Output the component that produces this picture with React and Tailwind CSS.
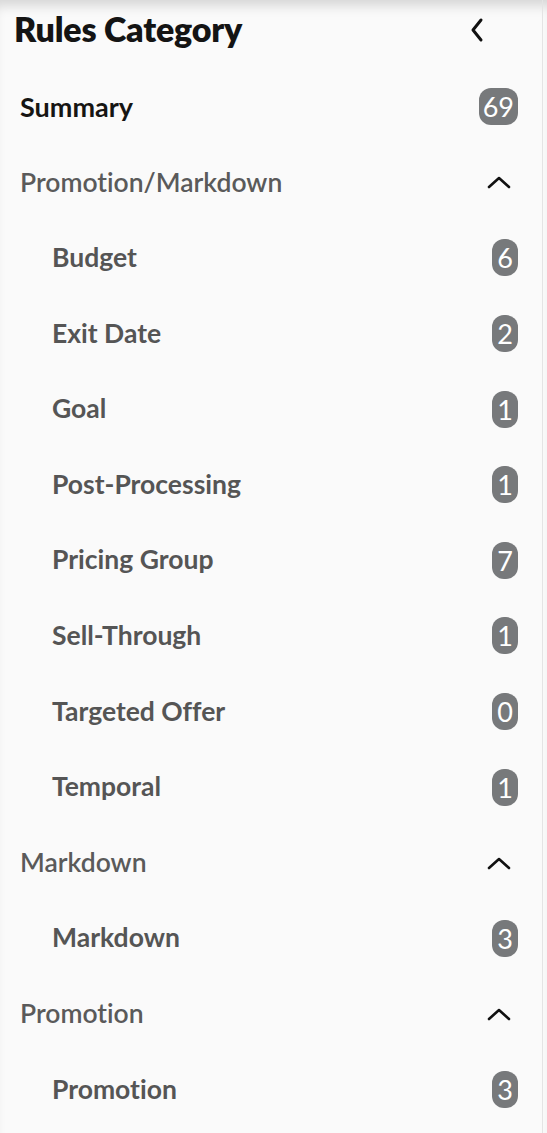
import React from "react";

const Badge = ({ n }) => (
  <span className="flex h-[37px] min-w-[26px] items-center justify-center rounded-[12px] bg-[#77797b] px-[4px] text-[27px] font-normal leading-none text-white">
    {n}
  </span>
);

const ChevronUp = () => (
  <svg width="24" height="16" viewBox="0 0 24 16" fill="none">
    <path d="M2 13 L12 4 L22 13" stroke="#111" strokeWidth="2.6" strokeLinecap="round" strokeLinejoin="round" />
  </svg>
);

const ChevronLeft = () => (
  <svg width="16" height="26" viewBox="0 0 16 26" fill="none">
    <path d="M12 3 L4 13 L12 23" stroke="#111" strokeWidth="3" strokeLinecap="round" strokeLinejoin="round" />
  </svg>
);

const Row = ({ children, right, indent, className }) => (
  <div className={`flex h-[75.6px] items-center justify-between pr-[24px] ${indent ? "pl-[52px]" : "pl-[20px]"}`}>
    <span className={className}>{children}</span>
    {right}
  </div>
);

const groups = [
  {
    name: "Promotion/Markdown",
    items: [
      ["Budget", 6],
      ["Exit Date", 2],
      ["Goal", 1],
      ["Post-Processing", 1],
      ["Pricing Group", 7],
      ["Sell-Through", 1],
      ["Targeted Offer", 0],
      ["Temporal", 1],
    ],
  },
  { name: "Markdown", items: [["Markdown", 3]] },
  { name: "Promotion", items: [["Promotion", 3]] },
];

export default function App() {
  return (
    <div
      className="h-[1133px] w-[547px] overflow-hidden bg-[#fafafa] shadow-[inset_0_12px_12px_-6px_rgba(0,0,0,0.14)] [font-variant-ligatures:none]"
      style={{ fontFamily: "Lato, 'Open Sans', sans-serif" }}
    >
      <div className="h-full w-[543px] border-r border-[#e4e4e4]">
        <div className="flex h-[69px] items-start justify-between pl-[14px] pr-[57px] pt-[7px]">
          <h1 className="text-[34px] font-extrabold leading-[44px] tracking-[-0.2px] text-[#141414]">Rules Category</h1>
          <div className="pt-[10px]">
            <ChevronLeft />
          </div>
        </div>
        <Row className="text-[27px] font-bold text-[#161513]" right={<Badge n={69} />}>
          Summary
        </Row>
        {groups.map((g) => (
          <React.Fragment key={g.name}>
            <div className="flex h-[75.6px] items-center justify-between pl-[20px] pr-[31px]">
              <span className="text-[26.5px] font-semibold text-[#5a5a5a]">{g.name}</span>
              <ChevronUp />
            </div>
            {g.items.map(([label, n]) => (
              <Row key={g.name + label} indent className="text-[26.5px] font-bold text-[#555555]" right={<Badge n={n} />}>
                {label}
              </Row>
            ))}
          </React.Fragment>
        ))}
      </div>
    </div>
  );
}
